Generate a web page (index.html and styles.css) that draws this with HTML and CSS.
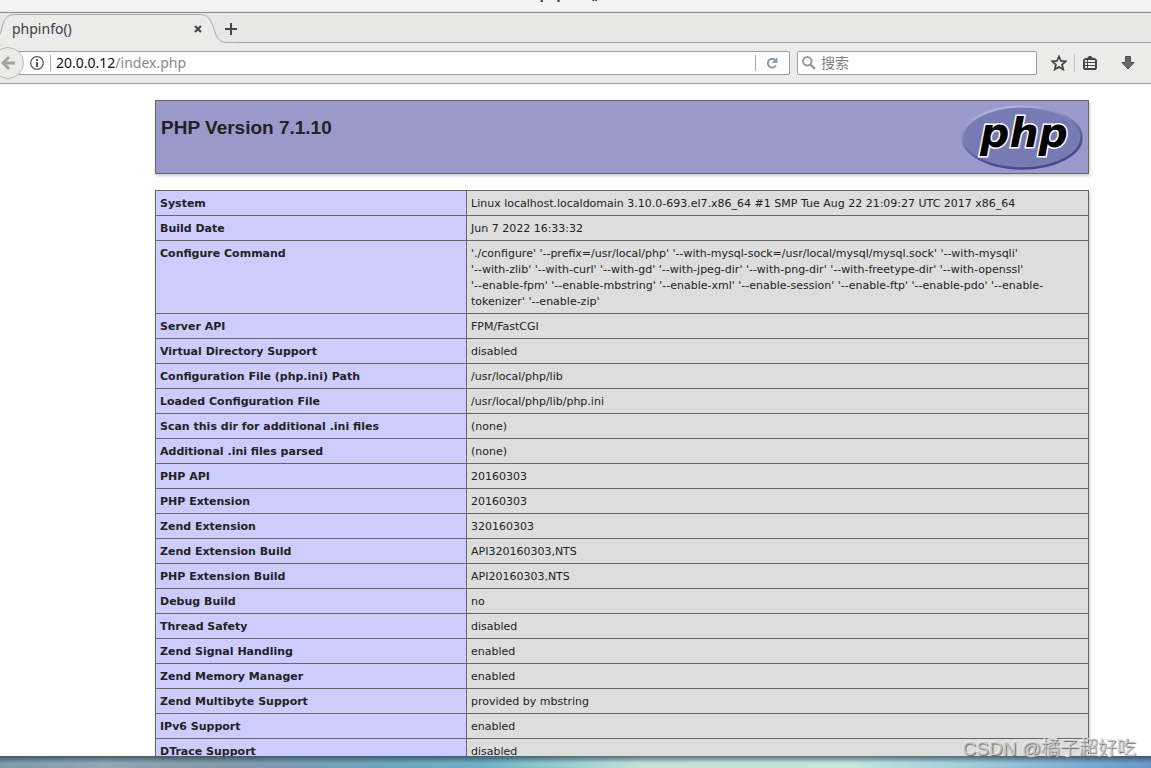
FILE: index.html
```html
<!DOCTYPE html>
<html lang="en">
<head>
<meta charset="utf-8">
<title>phpinfo()</title>
<link rel="stylesheet" href="styles.css">
</head>
<body>
<header class="chrome">
  <div class="titlebar"><span class="window-title">phpinfo() - Mozilla Firefox</span></div>
  <div class="tabstrip">
    <div class="tab">
      <span class="tab-label">phpinfo()</span>
      <button class="tab-close" aria-label="Close tab"><svg width="8" height="8" viewBox="0 0 8 8"><path d="M1 1L7 7M7 1L1 7" stroke="#454849" stroke-width="2.2"/></svg></button>
      <svg class="tab-shape" width="236" height="30" viewBox="0 0 236 30"><path d="M-2 25C3 19 1 1.500 14 1.500H200C218 1.500 210 29.500 226 29.500H236V30H-2Z" fill="#ebebea"/><path d="M-2 25C3 19 1 1.500 14 1.500H200C218 1.500 210 29.500 226 29.500H236" fill="none" stroke="#a6abb4"/></svg>
    </div>
    <button class="new-tab" aria-label="New tab"><svg width="12" height="12" viewBox="0 0 12 12"><path d="M6 0V12M0 6H12" stroke="#454849" stroke-width="2"/></svg></button>
  </div>
  <div class="toolbar">
    <button class="back" aria-label="Back"><svg width="15" height="16" viewBox="0 0 15 16"><path d="M14 8H3M8 2L2 8L8 14" fill="none" stroke="#a3a3a2" stroke-width="3"/></svg></button>
    <div class="urlbar">
      <button class="info" aria-label="Site information"><svg width="14" height="14" viewBox="0 0 14 14"><circle cx="7" cy="7" r="6.300" fill="none" stroke="#585858" stroke-width="1.200"/><path d="M7 6V11M7 3V5" stroke="#585858" stroke-width="2"/></svg></button>
      <span class="rule"></span>
      <a class="address" href="#"><span class="host">20.0.0.12</span>/index.php</a>
      <span class="rule rule-reload"></span>
      <button class="reload" aria-label="Reload"><svg width="12" height="12" viewBox="0 0 12 12"><path d="M9.500 3.200A4.400 4.400 0 1 0 10 8.500" fill="none" stroke="#8c9cab" stroke-width="2"/><path d="M11.500 0V6H5.500Z" fill="#8c9cab"/></svg></button>
    </div>
    <div class="searchbar">
      <svg width="14" height="14" viewBox="0 0 14 14"><circle cx="5.300" cy="5.300" r="4.200" fill="none" stroke="#9a9a9a" stroke-width="2"/><path d="M8.500 8.500L13 13" stroke="#9a9a9a" stroke-width="2.400"/></svg>
      <input class="search-input" type="text" aria-label="搜索" placeholder="搜索">
    </div>
    <div class="tools">
      <button class="tool" aria-label="Bookmark"><svg width="16" height="16" viewBox="0 0 16 16"><path d="M8 1.500L10 6L14.700 6.400L11.100 9.600L12.200 14.400L8 11.900L3.800 14.400L4.900 9.600L1.300 6.400L6 6Z" fill="none" stroke="#474747" stroke-width="1.800"/></svg></button>
      <span class="tool-rule"></span>
      <button class="tool" aria-label="Library"><svg width="16" height="16" viewBox="0 0 16 16"><path d="M1 5L3 3H5L7 1H9L11 3H13L15 5V13L14 15H2L1 13Z" fill="#474747"/><path d="M3 5H13V13H3Z" fill="#f0f0ef"/><path d="M3 7.500H13M3 10.500H13M5.500 5V13" stroke="#474747"/></svg></button>
      <button class="tool tool-download" aria-label="Downloads"><svg width="16" height="16" viewBox="0 0 16 16"><path d="M5.500 1.500H10.500V7.500H14L8 14L2 7.500H5.500Z" fill="#686868" stroke="#4d4d4d"/></svg></button>
    </div>
  </div>
</header>
<main class="page">
  <div class="center">
    <section class="banner">
      <h1 class="version">PHP Version 7.1.10</h1>
      <svg class="logo" width="122" height="65" viewBox="0 0 122 65" role="img" aria-label="PHP logo">
        <defs><linearGradient id="rim" x1="0.300" y1="0" x2="0.700" y2="1"><stop offset="0" stop-color="#b4b5da"/><stop offset="0.450" stop-color="#7377ad"/><stop offset="0.800" stop-color="#484a8e"/></linearGradient></defs>
        <ellipse cx="61" cy="32.500" rx="59.500" ry="31" fill="#777bb3" stroke="url(#rim)" stroke-width="2.500"/>
        <text class="logo-text" x="63" y="42" text-anchor="middle">php</text>
      </svg>
    </section>
    <table class="info-table">
      <tr><th scope="row">System</th><td>Linux localhost.localdomain 3.10.0-693.el7.x86_64 #1 SMP Tue Aug 22 21:09:27 UTC 2017 x86_64</td></tr>
      <tr><th scope="row">Build Date</th><td>Jun 7 2022 16:33:32</td></tr>
      <tr><th scope="row">Configure Command</th><td>'./configure' '--prefix=/usr/local/php' '--with-mysql-sock=/usr/local/mysql/mysql.sock' '--with-mysqli'<br>'--with-zlib' '--with-curl' '--with-gd' '--with-jpeg-dir' '--with-png-dir' '--with-freetype-dir' '--with-openssl'<br>'--enable-fpm' '--enable-mbstring' '--enable-xml' '--enable-session' '--enable-ftp' '--enable-pdo' '--enable-<br>tokenizer' '--enable-zip'</td></tr>
      <tr><th scope="row">Server API</th><td>FPM/FastCGI</td></tr>
      <tr><th scope="row">Virtual Directory Support</th><td>disabled</td></tr>
      <tr><th scope="row">Configuration File (php.ini) Path</th><td>/usr/local/php/lib</td></tr>
      <tr><th scope="row">Loaded Configuration File</th><td>/usr/local/php/lib/php.ini</td></tr>
      <tr><th scope="row">Scan this dir for additional .ini files</th><td>(none)</td></tr>
      <tr><th scope="row">Additional .ini files parsed</th><td>(none)</td></tr>
      <tr><th scope="row">PHP API</th><td>20160303</td></tr>
      <tr><th scope="row">PHP Extension</th><td>20160303</td></tr>
      <tr><th scope="row">Zend Extension</th><td>320160303</td></tr>
      <tr><th scope="row">Zend Extension Build</th><td>API320160303,NTS</td></tr>
      <tr><th scope="row">PHP Extension Build</th><td>API20160303,NTS</td></tr>
      <tr><th scope="row">Debug Build</th><td>no</td></tr>
      <tr><th scope="row">Thread Safety</th><td>disabled</td></tr>
      <tr><th scope="row">Zend Signal Handling</th><td>enabled</td></tr>
      <tr><th scope="row">Zend Memory Manager</th><td>enabled</td></tr>
      <tr><th scope="row">Zend Multibyte Support</th><td>provided by mbstring</td></tr>
      <tr><th scope="row">IPv6 Support</th><td>enabled</td></tr>
      <tr><th scope="row">DTrace Support</th><td>disabled</td></tr>
    </table>
  </div>
</main>
<footer class="desktop"></footer>
<div class="watermark">CSDN @橘子超好吃</div>
</body>
</html>
```

FILE: styles.css
```css
* { box-sizing: border-box; }
body {
  margin: 0;
  height: 100vh;
  display: flex;
  flex-direction: column;
  overflow: hidden;
  background: #fff;
  color: #222;
  font-family: "Noto Sans", "Noto Sans CJK SC", sans-serif;
}
button { border: 0; padding: 0; background: none; display: flex; align-items: center; justify-content: center; }
svg { display: block; flex: none; }

.chrome { flex: none; border-bottom: 1px solid #999; background: #ebebea; }
.titlebar {
  height: 13px;
  display: flex;
  align-items: flex-end;
  justify-content: center;
  padding: 0 0 10px 93px;
  overflow: hidden;
  background: linear-gradient(#f4f4f4 10px, #e4e4e4);
  border-bottom: 1px solid #8c8c8c;
}
.window-title { font-size: 13px; font-weight: 700; line-height: 16px; color: #2e3436; white-space: nowrap; }
.tabstrip { height: 30px; display: flex; background: #e7e7e5; border-bottom: 1px solid #a0a3a6; }
.tab { position: relative; width: 224px; height: 30px; display: flex; align-items: center; padding: 2px 22px 0 12px; }
.tab-shape { position: absolute; left: 0; top: 0; }
.tab-label { flex: 1; z-index: 1; font-size: 14px; line-height: 20px; color: #3b4043; }
.tab-close { z-index: 1; width: 8px; height: 20px; }
.new-tab { z-index: 1; width: 14px; height: 32px; }
.toolbar { height: 40px; display: flex; align-items: center; }
.back {
  flex: none;
  z-index: 1;
  width: 32px;
  height: 32px;
  margin-left: -8px;
  border: 1px solid #b8b8b6;
  border-radius: 50%;
  background: #ebebea;
}
.urlbar {
  flex: 1;
  height: 24px;
  margin-left: -6px;
  padding: 0 11px;
  display: flex;
  align-items: center;
  background: #fff;
  border: 1px solid #9c9c9c;
  border-radius: 2px;
}
.rule { width: 1px; height: 16px; margin: 0 5px 0 6px; background: #aaa; }
.rule-reload { margin: 0 10px 0 0; }
.address { flex: 1; color: #8b8b8b; font-size: 14px; line-height: 20px; text-decoration: none; }
.host { color: #111; }
.searchbar {
  width: 240px;
  height: 24px;
  margin-left: 7px;
  padding: 0 4px;
  display: flex;
  align-items: center;
  gap: 5px;
  background: #fff;
  border: 1px solid #9c9c9c;
  border-radius: 2px;
}
.search-input { flex: 1; min-width: 0; height: 22px; border: 0; padding: 0 0 3px; background: none; font: 14px "Noto Sans CJK SC", sans-serif; }
.search-input::placeholder { color: #808080; opacity: 1; }
.tools { display: flex; align-items: center; padding: 0 15px 0 14px; }
.tool { width: 16px; height: 20px; }
.tool-rule { width: 1px; height: 18px; margin: 0 7px; background: #c6c6c4; }
.tool-download { margin-left: 22px; }

.page { flex: 1; min-height: 0; overflow: hidden; display: flex; justify-content: center; padding: 16px 0 0 93px; }
.center { flex: 0 1 934px; }
.banner {
  display: flex;
  justify-content: space-between;
  align-items: flex-start;
  height: 74px;
  padding: 4px 5px;
  margin-bottom: 16px;
  background: #99c;
  border: 1px solid #666;
  box-shadow: 1px 2px 3px #ccc;
}
.version { margin: 11px 0 0; font: 700 19px/24px "Liberation Sans", sans-serif; }
.logo-text {
  font: italic 700 41px "DejaVu Sans", sans-serif;
  fill: #000;
  stroke: #fff;
  stroke-width: 3px;
  paint-order: stroke;
}
.info-table {
  width: 100%;
  border-collapse: collapse;
  box-shadow: 1px 2px 3px #ccc;
  font: 11px/16px "DejaVu Sans", sans-serif;
}
.info-table th, .info-table td { border: 1px solid #666; padding: 5px 4px 3px; vertical-align: baseline; text-align: left; }
.info-table th { width: 311px; background: #ccf; font-weight: 700; }
.info-table td { background: #ddd; white-space: nowrap; }

.desktop {
  flex: none;
  height: 12px;
  background:
    linear-gradient(rgba(30, 50, 65, 0.650), rgba(30, 50, 65, 0) 7px),
    linear-gradient(90deg, #7a9aab, #92a6b3 9%, #8097a8 20%, #6fa0b6 30%, #6cb0c4 42%, #9dd0cf 50%, #c6dfdc 56%, #c2e5df 74%, #a0cdd9 84%, #7faed1 93%, #6896c8);
}
.watermark {
  position: absolute;
  right: 15px;
  bottom: 6px;
  font: 300 19px/26px "Liberation Sans", "Noto Sans CJK SC", sans-serif;
  color: #c4c4c4;
  text-shadow: 1px 1px 1px #666, -1px -1px 0 #eee;
  white-space: nowrap;
}
```
